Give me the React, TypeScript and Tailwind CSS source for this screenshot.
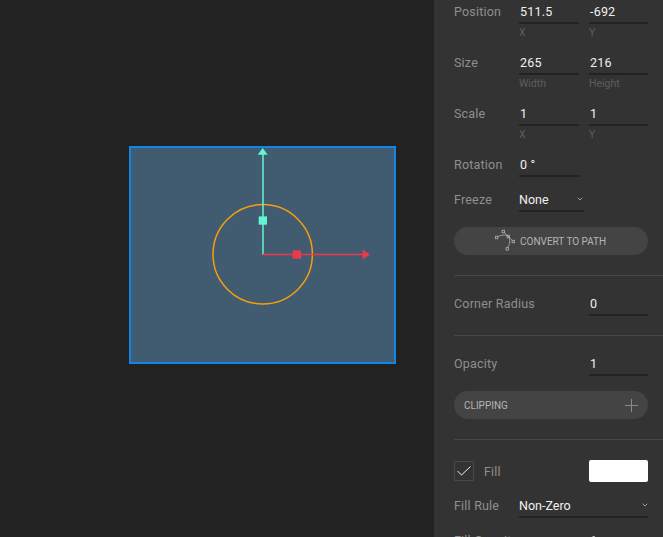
const labelCls = "text-[12.5px] leading-[16px] tracking-[0.2px] text-[#8f8f8f]";
const valueCls = "text-[12.5px] leading-[16px] tracking-[0.2px] text-[#f0f0f0]";
const selectCls = "text-[12.5px] leading-[16px] text-[#f0f0f0]";

function Field({ value, sub, width = "w-[60px]" }: { value: string; sub?: string; width?: string }) {
  return (
    <div className={width}>
      <div className={`${valueCls} h-[18px] border-b-2 border-[#222222] box-content pl-px`}>{value}</div>
      {sub && <div className="mt-[2px] text-[10.5px] leading-[14px] text-[#5e5e5e]">{sub}</div>}
    </div>
  );
}

function PairRow({ label, a, b, subA, subB }: { label: string; a: string; b: string; subA: string; subB: string }) {
  return (
    <div className="flex h-[51px] pl-[20px]">
      <div className={`${labelCls} w-[65px]`}>{label}</div>
      <div className="flex gap-[10px]">
        <Field value={a} sub={subA} />
        <Field value={b} sub={subB} width="w-[59px]" />
      </div>
    </div>
  );
}

function Chevron() {
  return (
    <svg width="6" height="4" viewBox="0 0 6 4" fill="none" stroke="#9a9a9a" strokeWidth="1">
      <path d="M0.7 0.7L3 3l2.3-2.3" />
    </svg>
  );
}

function PathIcon() {
  return (
    <svg width="22" height="24" viewBox="0 0 22 24" fill="none" stroke="#a8a8a8" strokeWidth="0.9">
      <path d="M3.5 8C7 6 11 5 14.3 7.5 16.5 11 16 15 13.6 18.6" />
      <path d="M10.2 3.4L18.4 11.6" />
      <rect x="1.4" y="7.3" width="2.4" height="2.4" />
      <rect x="8.1" y="1.3" width="2.4" height="2.4" />
      <rect x="13.1" y="6.3" width="2.4" height="2.4" />
      <rect x="18.1" y="11.3" width="2.4" height="2.4" />
      <rect x="12.1" y="18.6" width="2.4" height="2.4" />
    </svg>
  );
}

function Gizmo() {
  return (
    <svg width="263" height="214" viewBox="0 0 263 214" fill="none">
      <circle cx="131.7" cy="106.3" r="49.7" stroke="#f59f0c" strokeWidth="1.5" />
      <path d="M132 107V6" stroke="#64f5d2" strokeWidth="1.5" />
      <path d="M131.7 0L136.7 6.7H126.7Z" fill="#64f5d2" />
      <rect x="127.7" y="68.4" width="8.3" height="8.3" fill="#64f5d2" />
      <path d="M131.5 106.5H233" stroke="#ec3a4c" strokeWidth="1.5" />
      <path d="M239 106.5L231.7 101.5V111.5Z" fill="#ec3a4c" />
      <rect x="161.7" y="102.4" width="8.3" height="8.3" fill="#ec3a4c" />
    </svg>
  );
}

export default function App() {
  return (
    <div className="flex h-[537px] w-[663px] overflow-hidden bg-[#222222] font-['Roboto',sans-serif]">
      {/* canvas */}
      <div className="flex-1 pl-[129px] pt-[146px]">
        <div className="box-content h-[214px] w-[263px] border-2 border-[#0f86e8] bg-[#415b70]">
          <Gizmo />
        </div>
      </div>

      {/* inspector */}
      <div className="w-[229px] shrink-0 overflow-hidden bg-[#333333] pt-[4px]">
        <PairRow label="Position" a="511.5" b="-692" subA="X" subB="Y" />
        <PairRow label="Size" a="265" b="216" subA="Width" subB="Height" />
        <PairRow label="Scale" a="1" b="1" subA="X" subB="Y" />

        <div className="flex h-[35px] pl-[20px]">
          <div className={`${labelCls} w-[65px]`}>Rotation</div>
          <Field value="0 °" />
        </div>

        <div className="flex h-[35px] pl-[20px]">
          <div className={`${labelCls} w-[65px]`}>Freeze</div>
          <div className="flex h-[18px] w-[65px] box-content items-start justify-between border-b-2 border-[#222222]">
            <span className={selectCls}>None</span>
            <span className="mr-[1px] mt-[5px]"><Chevron /></span>
          </div>
        </div>

        <div className="mx-[20px] flex h-[28px] w-[194px] items-center gap-[4px] rounded-full bg-[#444444] pl-[40px]">
          <PathIcon />
          <span className="text-[10px] text-[#b5b5b5]">CONVERT TO PATH</span>
        </div>

        <div className="ml-[20px] mt-[20px] h-px bg-[#474747]" />

        <div className="flex h-[59px] items-start pl-[20px] pt-[20px]">
          <div className={`${labelCls} w-[135px]`}>Corner Radius</div>
          <Field value="0" width="w-[59px]" />
        </div>

        <div className="ml-[20px] h-px bg-[#474747]" />

        <div className="flex h-[55px] items-start pl-[20px] pt-[20px]">
          <div className={`${labelCls} w-[135px]`}>Opacity</div>
          <Field value="1" width="w-[59px]" />
        </div>

        <div className="mx-[20px] flex h-[28px] w-[194px] items-center justify-between rounded-full bg-[#444444] px-[10px]">
          <span className="text-[10px] text-[#b5b5b5]">CLIPPING</span>
          <svg width="13" height="13" viewBox="0 0 13 13" stroke="#8a8a8a" strokeWidth="1">
            <path d="M6.5 0v13M0 6.5h13" />
          </svg>
        </div>

        <div className="ml-[20px] mt-[20px] h-px bg-[#474747]" />

        <div className="mt-[20px] flex items-center pl-[20px]">
          <div className="flex h-[20px] w-[20px] items-center justify-center rounded-[1px] border border-[#4a4a4a]">
            <svg width="14" height="10" viewBox="0 0 14 10" fill="none" stroke="#f0f0f0" strokeWidth="1">
              <path d="M0.5 5l4 4L13.5 0.5" />
            </svg>
          </div>
          <span className={`${labelCls} ml-[10px] mt-[2px] w-[105px]`}>Fill</span>
          <div className="h-[22px] w-[59px] rounded-[2px] bg-white" />
        </div>

        <div className="mt-[16px] flex h-[35px] pl-[20px]">
          <div className={`${labelCls} w-[65px]`}>Fill Rule</div>
          <div className="flex h-[18px] w-[129px] box-content items-start justify-between border-b-2 border-[#222222]">
            <span className={selectCls}>Non-Zero</span>
            <span className="mt-[5px]"><Chevron /></span>
          </div>
        </div>

        <div className="flex pl-[20px]">
          <div className={`${labelCls} w-[135px]`}>Fill Opacity</div>
          <Field value="1" width="w-[59px]" />
        </div>
      </div>
    </div>
  );
}
